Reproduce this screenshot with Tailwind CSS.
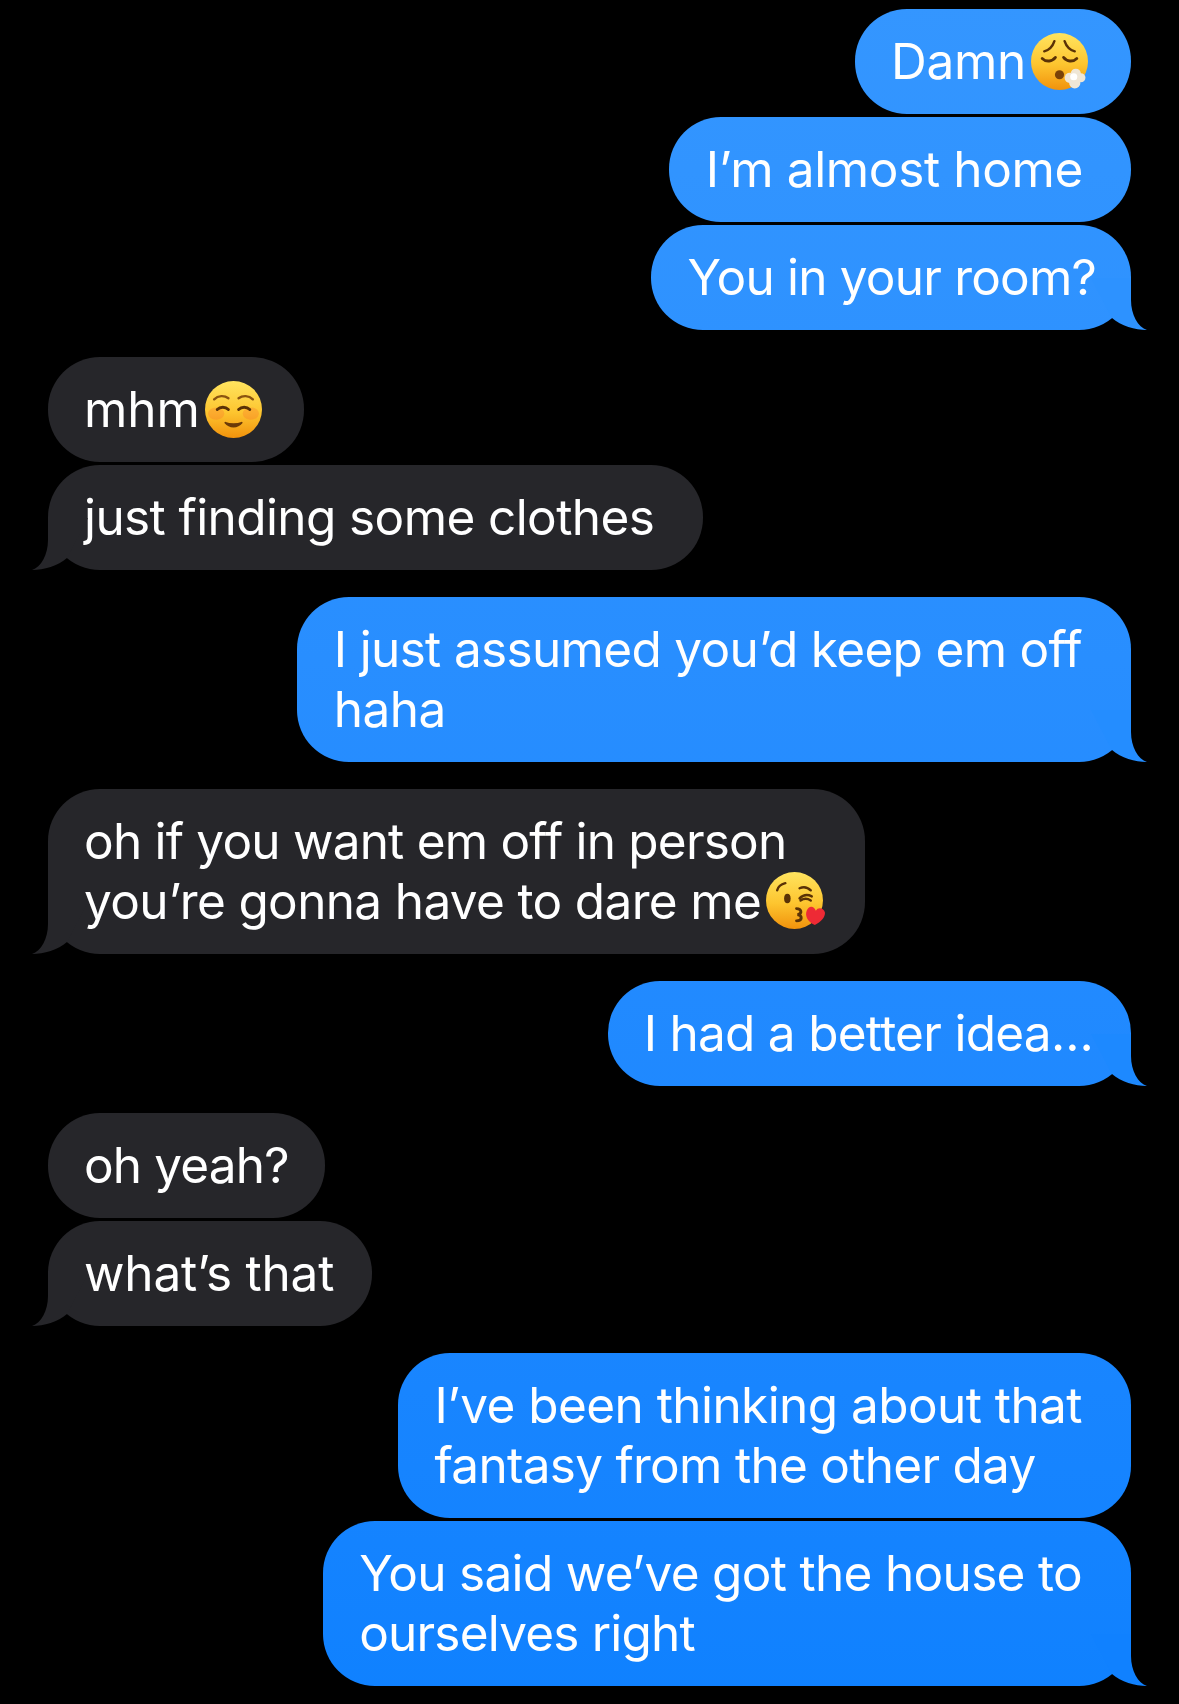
<!DOCTYPE html>
<html lang="en">
<head>
  <meta charset="UTF-8" />
  <title>Messages</title>
  <script src="https://cdn.jsdelivr.net/npm/@tailwindcss/browser@4"></script>
</head>
<body class="bg-black">
  <main class="h-[1704px] overflow-hidden flex flex-col pt-[9px] font-['Inter','Noto_Sans',sans-serif] text-[49.5px] leading-[60px] text-white">

    <!-- outgoing -->
    <div class="flex flex-col items-end gap-[3px] pr-[48px]">
      <div class="flex items-center rounded-[52px] bg-linear-to-b from-[#3496ff] to-[#0f81ff] bg-fixed pt-[22px] pb-[23px] pl-[36px] pr-[43px]">
        <span class="tracking-[-0.3px]">Damn</span>
        <svg class="ml-[5px] w-[57px] h-[57px]" viewBox="0 0 56 56">
          <defs><linearGradient id="f1" x1="0" y1="0" x2="0" y2="1"><stop offset="0" stop-color="#ffe45f"/><stop offset="0.55" stop-color="#fdc52f"/><stop offset="1" stop-color="#f1920c"/></linearGradient></defs>
          <circle cx="28" cy="28" r="28" fill="url(#f1)"/>
          <path d="M13 18 C17 17 21 14 23 8 M43 18 C39 17 35 14 33 8" fill="none" stroke="#5a3206" stroke-width="2.4" stroke-linecap="round"/>
          <path d="M11 25 C15 29 21 28 24 24 M45 25 C41 29 35 28 32 24" fill="none" stroke="#5a3206" stroke-width="2.8" stroke-linecap="round"/>
          <circle cx="28" cy="41" r="4.5" fill="#7a4208"/>
          <g fill="#efe6d6"><circle cx="38" cy="44" r="5"/><circle cx="44" cy="40" r="5"/><circle cx="49" cy="44" r="4.5"/><circle cx="43" cy="49" r="5.5"/></g>
          <circle cx="42" cy="43" r="3.5" fill="#fff"/>
        </svg>
      </div>
      <div class="rounded-[52px] bg-linear-to-b from-[#3496ff] to-[#0f81ff] bg-fixed pl-[37px] pr-[48px] pt-[22px] pb-[23px] tracking-[-0.37px]">I’m almost home</div>
      <div class="relative rounded-[52px] bg-linear-to-b from-[#3496ff] to-[#0f81ff] bg-fixed pl-[37px] pr-[35px] pt-[22px] pb-[23px] tracking-[-0.8px]">
        You in your room?
        <svg class="absolute right-[-16px] bottom-0 w-[56px] h-[60px]" viewBox="0 0 56 60"><path d="M0 8 H40 V30 C40 45 47 57 56 60 C44 60 30 56 21 48 Z" fill="#2d92ff"/></svg>
      </div>
    </div>

    <!-- incoming -->
    <div class="mt-[27px] flex flex-col items-start gap-[3px] pl-[48px]">
      <div class="flex items-center rounded-[52px] bg-[#26262a] pt-[22px] pb-[23px] pl-[36px] pr-[42px]">
        <span class="tracking-[-0.1px]">mhm</span>
        <svg class="ml-[5px] w-[57px] h-[57px]" viewBox="0 0 56 56">
          <defs><linearGradient id="f2" x1="0" y1="0" x2="0" y2="1"><stop offset="0" stop-color="#ffe45f"/><stop offset="0.55" stop-color="#fdc52f"/><stop offset="1" stop-color="#f1920c"/></linearGradient></defs>
          <circle cx="28" cy="28" r="28" fill="url(#f2)"/>
          <ellipse cx="11" cy="32" rx="8" ry="6" fill="#f9702f" opacity="0.3"/>
          <ellipse cx="45" cy="32" rx="8" ry="6" fill="#f9702f" opacity="0.3"/>
          <path d="M9 18 C13 14 19 14 23 17 M33 17 C37 14 43 14 47 18" fill="none" stroke="#8a5410" stroke-width="2.4" stroke-linecap="round"/>
          <path d="M12 28 C15 25 20 25 23 28 M33 28 C36 25 41 25 44 28" fill="none" stroke="#5a3206" stroke-width="2.8" stroke-linecap="round"/>
          <path d="M20 41 C24 46 32 46 36 41 C32 43 24 43 20 41 Z" fill="#6b3a08" stroke="#6b3a08" stroke-width="1.8" stroke-linejoin="round"/>
        </svg>
      </div>
      <div class="relative rounded-[52px] bg-[#26262a] pl-[36px] pr-[49px] pt-[22px] pb-[23px] tracking-[-0.6px]">
        just finding some clothes
        <svg class="absolute left-[-16px] bottom-0 w-[56px] h-[60px]" viewBox="0 0 56 60"><path d="M56 8 H16 V30 C16 45 9 57 0 60 C12 60 26 56 35 48 Z" fill="#26262a"/></svg>
      </div>
    </div>

    <div class="mt-[27px] flex flex-col items-end pr-[48px]">
      <div class="relative rounded-[52px] bg-linear-to-b from-[#3496ff] to-[#0f81ff] bg-fixed pl-[37px] pr-[49px] pt-[22px] pb-[23px]">
        <div class="tracking-[-0.67px]">I just assumed you’d keep em off</div>
        <div class="tracking-[-0.57px]">haha</div>
        <svg class="absolute right-[-16px] bottom-0 w-[56px] h-[60px]" viewBox="0 0 56 60"><path d="M0 8 H40 V30 C40 45 47 57 56 60 C44 60 30 56 21 48 Z" fill="#248dff"/></svg>
      </div>
    </div>

    <div class="mt-[27px] flex flex-col items-start pl-[48px]">
      <div class="relative rounded-[52px] bg-[#26262a] pt-[22px] pb-[23px] pl-[36px] pr-[40px]">
        <div class="tracking-[-0.79px]">oh if you want em off in person</div>
        <div class="flex items-center">
          <span class="tracking-[-0.65px]">you’re gonna have to dare me</span>
          <svg class="ml-[5px] w-[59px] h-[59px]" viewBox="0 0 58 58">
            <defs><linearGradient id="f3" x1="0" y1="0" x2="0" y2="1"><stop offset="0" stop-color="#ffe45f"/><stop offset="0.55" stop-color="#fdc52f"/><stop offset="1" stop-color="#f1920c"/></linearGradient></defs>
            <circle cx="28" cy="28" r="28" fill="url(#f3)"/>
            <path d="M11 18 C12 14 15 12 19 11 M33 16 C37 14 41 15 44 18" fill="none" stroke="#5a3206" stroke-width="2.4" stroke-linecap="round"/>
            <ellipse cx="21" cy="26" rx="3.2" ry="4.6" fill="#5a3206"/>
            <path d="M33 26 C37 22 41 22 45 24 M34 28 C37 26 41 26 44 28" fill="none" stroke="#5a3206" stroke-width="2.4" stroke-linecap="round"/>
            <path d="M30 36 C35 36 36 41 31 42 C36 43 36 48 30 48" fill="none" stroke="#5a3206" stroke-width="2.8" stroke-linecap="round"/>
            <path d="M48 52 C41 49 38 43 40 38 C42 33 47 33 49 38 C51 34 57 35 58 40 C58 45 54 49 48 52 Z" fill="#ee2a35"/>
          </svg>
        </div>
        <svg class="absolute left-[-16px] bottom-0 w-[56px] h-[60px]" viewBox="0 0 56 60"><path d="M56 8 H16 V30 C16 45 9 57 0 60 C12 60 26 56 35 48 Z" fill="#26262a"/></svg>
      </div>
    </div>

    <div class="mt-[27px] flex flex-col items-end pr-[48px]">
      <div class="relative rounded-[52px] bg-linear-to-b from-[#3496ff] to-[#0f81ff] bg-fixed pl-[36px] pr-[38px] pt-[22px] pb-[23px] tracking-[-0.72px]">
        I had a better idea…
        <svg class="absolute right-[-16px] bottom-0 w-[56px] h-[60px]" viewBox="0 0 56 60"><path d="M0 8 H40 V30 C40 45 47 57 56 60 C44 60 30 56 21 48 Z" fill="#1d89ff"/></svg>
      </div>
    </div>

    <div class="mt-[27px] flex flex-col items-start gap-[3px] pl-[48px]">
      <div class="rounded-[52px] bg-[#26262a] pl-[36px] pr-[36px] pt-[22px] pb-[23px] tracking-[-0.84px]">oh yeah?</div>
      <div class="relative rounded-[52px] bg-[#26262a] pl-[36px] pr-[38px] pt-[22px] pb-[23px] tracking-[-0.2px]">
        what’s that
        <svg class="absolute left-[-16px] bottom-0 w-[56px] h-[60px]" viewBox="0 0 56 60"><path d="M56 8 H16 V30 C16 45 9 57 0 60 C12 60 26 56 35 48 Z" fill="#26262a"/></svg>
      </div>
    </div>

    <div class="mt-[27px] flex flex-col items-end gap-[3px] pr-[48px]">
      <div class="rounded-[52px] bg-linear-to-b from-[#3496ff] to-[#0f81ff] bg-fixed pl-[37px] pr-[49px] pt-[22px] pb-[23px]">
        <div class="tracking-[-0.56px]">I’ve been thinking about that</div>
        <div class="tracking-[-0.72px]">fantasy from the other day</div>
      </div>
      <div class="relative rounded-[52px] bg-linear-to-b from-[#3496ff] to-[#0f81ff] bg-fixed pl-[36px] pr-[49px] pt-[22px] pb-[23px]">
        <div class="tracking-[-0.69px]">You said we’ve got the house to</div>
        <div class="tracking-[-0.8px]">ourselves right</div>
        <svg class="absolute right-[-16px] bottom-0 w-[56px] h-[60px]" viewBox="0 0 56 60"><path d="M0 8 H40 V30 C40 45 47 57 56 60 C44 60 30 56 21 48 Z" fill="#1081ff"/></svg>
      </div>
    </div>
  </main>
</body>
</html>
